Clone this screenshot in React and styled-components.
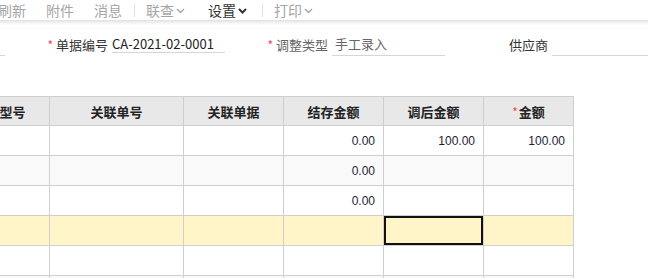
import React from 'react';
import styled, { createGlobalStyle } from 'styled-components';

const GlobalStyle = createGlobalStyle`
  html, body {
    margin: 0;
    padding: 0;
    background: #fff;
    font-family: "Noto Sans CJK SC", "Noto Sans", sans-serif;
    overflow: hidden;
  }
`;

const toolItems = [
  { label: '刷新' },
  { label: '附件' },
  { label: '消息', divider: true },
  { label: '联查', menu: true },
  { label: '设置', menu: true, active: true, divider: true },
  { label: '打印', menu: true },
];

// first field is scrolled out of view, only its underline end shows
const fields = [
  { id: 'date', label: '', value: '', h: 22 },
  { id: 'code', label: '单据编号', value: 'CA-2021-02-0001', required: true, h: 16, dark: true },
  { id: 'type', label: '调整类型', value: '手工录入', required: true, h: 22, muted: true, pad: 3 },
  { id: 'vendor', label: '供应商', value: '', h: 22 },
];

const columns = [
  { title: '规格型号', width: 100 },
  { title: '关联单号', width: 134 },
  { title: '关联单据', width: 100 },
  { title: '结存金额', width: 100 },
  { title: '调后金额', width: 100 },
  { title: '金额', width: 90, required: true },
];

const rows = [
  { cells: ['', '', '', '0.00', '100.00', '100.00'] },
  { cells: ['', '', '', '0.00', '', ''], stripe: true },
  { cells: ['', '', '', '0.00', '', ''] },
  { cells: ['', '', '', '', '', ''], current: true, selected: 4 },
  { cells: ['', '', '', '', '', ''] },
  { cells: ['', '', '', '', '', ''], stripe: true },
];

const Chevron = ({ active }) => (
  <svg width="9" height="6" viewBox="0 0 9 6">
    <polyline
      points="1,1 4.5,4.5 8,1"
      fill="none"
      stroke={active ? '#333' : '#aaa'}
      strokeWidth={active ? 2 : 1.5}
    />
  </svg>
);

const App = () => {
  return (
    <>
      <GlobalStyle />
      <Page>
        <Toolbar>
          {toolItems.map((item) => (
            <React.Fragment key={item.label}>
              <ToolItem $active={item.active} $menu={item.menu}>
                {item.label}
                {item.menu && <Chevron active={item.active} />}
              </ToolItem>
              {item.divider && <Divider />}
            </React.Fragment>
          ))}
        </Toolbar>

        <FormRow>
          {fields.map((f) => (
            <Field key={f.id}>
              <Label $muted={f.muted}>
                {f.required && <Star>*</Star>}
                {f.label}
              </Label>
              <InputLine $h={f.h} $dark={f.dark} $pad={f.pad}>
                {f.value}
              </InputLine>
            </Field>
          ))}
        </FormRow>

        <TableWrap>
          <Grid>
            <colgroup>
              {columns.map((c) => (
                <col key={c.title} style={{ width: c.width }} />
              ))}
            </colgroup>
            <thead>
              <tr>
                {columns.map((c) => (
                  <Th key={c.title}>
                    {c.required && <HeadStar>*</HeadStar>}
                    {c.title}
                  </Th>
                ))}
              </tr>
            </thead>
            <tbody>
              {rows.map((r, i) => (
                <Tr key={i} $stripe={r.stripe} $current={r.current}>
                  {r.cells.map((v, j) => (
                    <Td key={j} $selected={r.selected === j}>
                      {v}
                    </Td>
                  ))}
                </Tr>
              ))}
            </tbody>
          </Grid>
        </TableWrap>
      </Page>
    </>
  );
};

export default App;

const Page = styled.div`
  width: 648px;
  height: 278px;
  overflow: hidden;
  background: #fff;
`;

const Toolbar = styled.div`
  position: relative;
  z-index: 1;
  display: flex;
  align-items: center;
  height: 20px;
  margin-left: -12px;
  margin-right: -20px;
  background: #fff;
  box-shadow: 0 2px 4px rgba(0, 0, 0, 0.14);
`;

const ToolItem = styled.div`
  display: flex;
  align-items: center;
  gap: 2px;
  padding: ${(p) => (p.$menu ? '0 13px 0 10px' : '0 10px')};
  font-size: 14px;
  line-height: 18px;
  color: ${(p) => (p.$active ? '#333' : '#a5a5a5')};
  white-space: nowrap;

  svg {
    margin-top: 1px;
  }
`;

const Divider = styled.span`
  width: 1px;
  height: 13px;
  margin: 0 1px 0 2px;
  background: #dde3ea;
`;

const FormRow = styled.div`
  display: grid;
  grid-template-columns: repeat(4, 220px);
  align-items: center;
  height: 24px;
  margin: 13px 0 0 -215px;
`;

const Field = styled.div`
  display: flex;
  align-items: center;
  gap: 4px;
`;

const Label = styled.div`
  width: 103px;
  text-align: right;
  font-size: 13px;
  line-height: 22px;
  white-space: nowrap;
  color: ${(p) => (p.$muted ? '#666' : '#333')};
`;

const Star = styled.span`
  margin-right: 3px;
  color: #f5455c;
  font-size: 12px;
`;

const InputLine = styled.div`
  box-sizing: border-box;
  width: 113px;
  height: ${(p) => p.$h}px;
  padding-left: ${(p) => p.$pad || 0}px;
  border-bottom: 1px solid #d6d6d6;
  font-size: 13px;
  line-height: ${(p) => p.$h - 3}px;
  color: ${(p) => (p.$dark ? '#222' : '#666')};
  white-space: nowrap;
`;

const TableWrap = styled.div`
  margin-top: 39px;
  overflow: hidden;
`;

const Grid = styled.table`
  margin-left: -51px;
  width: 624px;
  table-layout: fixed;
  border-collapse: collapse;
  border-top: 1px solid #ccc;
`;

const Th = styled.th`
  height: 28px;
  padding: 0;
  border: 1px solid #cfcfcf;
  background: #e8e8e8;
  font-size: 13px;
  font-weight: 700;
  color: #222;
  text-align: center;
  white-space: nowrap;
`;

const HeadStar = styled.span`
  margin-right: 1px;
  color: #f5455c;
  font-weight: 400;
  font-size: 12px;
`;

const Tr = styled.tr`
  background: ${(p) => (p.$current ? '#fff5c9' : p.$stripe ? '#f9f9f9' : '#fff')};
`;

const Td = styled.td`
  height: 29px;
  padding: 0 8px 0 0;
  border: 1px solid #cfcfcf;
  font-family: "Liberation Sans", Arial, sans-serif;
  font-size: 12px;
  color: #1d1d35;
  text-align: right;
  box-shadow: ${(p) => (p.$selected ? 'inset 0 0 0 2px #111' : 'none')};
`;
